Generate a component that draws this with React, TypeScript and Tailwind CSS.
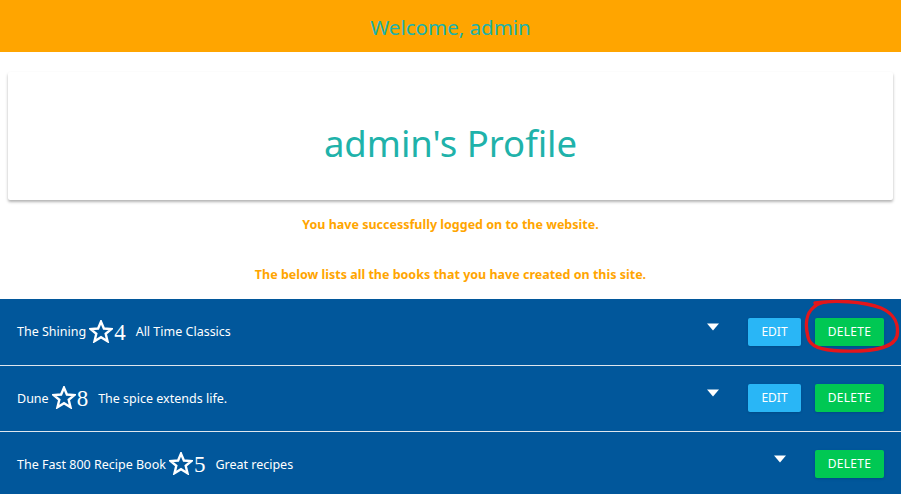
interface Book {
  title: string;
  rating: number;
  blurb: string;
  canEdit: boolean;
}

const books: Book[] = [
  { title: "The Shining", rating: 4, blurb: "All Time Classics", canEdit: true },
  { title: "Dune", rating: 8, blurb: "The spice extends life.", canEdit: true },
  { title: "The Fast 800 Recipe Book", rating: 5, blurb: "Great recipes", canEdit: false },
];

const StarIcon = () => (
  <svg width="24" height="23" viewBox="0 0 24 23" fill="none" stroke="white" strokeWidth="2.4" strokeLinejoin="miter">
    <path d="M12 1.6 L14.9 8.5 L22.4 9.1 L16.7 13.8 L18.5 21.2 L12 17.2 L5.5 21.2 L7.3 13.8 L1.6 9.1 L9.1 8.5 Z" />
  </svg>
);

const Caret = () => (
  <svg width="12" height="8" viewBox="0 0 12 8">
    <path d="M0 0.5 L12 0.5 L6 7.5 Z" fill="white" />
  </svg>
);

const BookRow = ({ book, first }: { book: Book; first: boolean }) => {
  return (
    <div className={`relative flex items-center h-[66px] bg-[#01579b] pl-[17px] pr-[17px] ${first ? "" : "border-t border-[#dfe6ee]"}`}>
      <div className="flex items-center text-[12.5px] text-white mt-[2px]">
        <span>{book.title}</span>
        <span className="ml-[3px] mb-[3px]"><StarIcon /></span>
        <span className="font-['Liberation_Serif',serif] text-[23px] leading-none ml-[1px] mb-[1px]">{book.rating}</span>
        <span className="ml-[10px]">{book.blurb}</span>
      </div>
      <div className="ml-auto flex items-center">
        <span className="mr-[29px] mb-[10px]"><Caret /></span>
        {book.canEdit && (
          <button className="w-[53px] h-[28px] mr-[14px] bg-[#29b6f6] text-white text-[12px] rounded-[2px] shadow-sm">
            EDIT
          </button>
        )}
        <button className="w-[69px] h-[28px] bg-[#00c853] text-white text-[12px] tracking-[0.3px] rounded-[2px] shadow-sm">
          DELETE
        </button>
      </div>
      {first && (
        <svg className="absolute right-0 top-0 pointer-events-none" width="100" height="60" viewBox="0 0 100 60" fill="none">
          <path
            d="M14 4 C 32 1, 62 2, 80 9 C 94 15, 98 26, 96 37 C 93 49, 70 53, 40 52 C 20 51, 9 48, 7 38 C 4 26, 5 14, 13 8 C 17 4, 22 3, 26 3"
            stroke="#e3161b"
            strokeWidth="3.4"
            strokeLinecap="round"
          />
        </svg>
      )}
    </div>
  );
};

const App = () => {
  return (
    <div className="min-h-[494px] bg-white font-['Noto_Sans',sans-serif] overflow-hidden">
      <header className="h-[52px] bg-[#ffa500] flex items-center justify-center">
        <h1 className="text-[20.5px] text-[#20b2aa] mt-[2px]">Welcome, admin</h1>
      </header>

      <div className="mx-[8px] mt-[20px] h-[128px] bg-white rounded-[2px] shadow-[0_2px_3px_rgba(0,0,0,0.3)] flex items-center justify-center">
        <h2 className="text-[36.5px] text-[#20b2aa] mt-[14px]">admin's Profile</h2>
      </div>

      <p className="mt-[16px] text-center text-[12.5px] font-bold text-[#ffa500]">
        You have successfully logged on to the website.
      </p>
      <p className="mt-[31px] text-center text-[12.5px] font-bold text-[#ffa500]">
        The below lists all the books that you have created on this site.
      </p>

      <div className="mt-[14px] flex flex-col">
        {books.map((b, i) => (
          <BookRow key={b.title} book={b} first={i === 0} />
        ))}
      </div>
    </div>
  );
};

export default App;
